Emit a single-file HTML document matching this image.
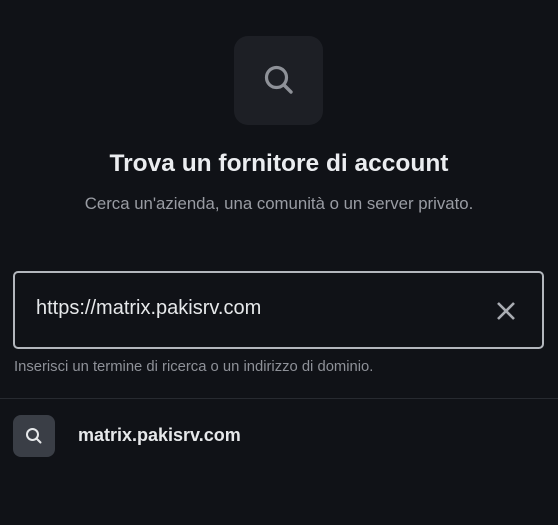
<!DOCTYPE html>
<html><head><style>
body{margin:0;width:558px;height:525px;background:#101217;font-family:"Liberation Sans",sans-serif;position:relative;overflow:hidden}
.a{position:absolute}
</style></head><body>
<div class="a" style="left:234px;top:36px;width:89px;height:89px;border-radius:14px;background:#1d1f25"></div>
<svg class="a" style="left:260px;top:61px" width="38" height="38" viewBox="0 0 38 38"><circle cx="16.5" cy="16.5" r="10" fill="none" stroke="#8e9198" stroke-width="3.2"/><line x1="24" y1="24" x2="31" y2="31" stroke="#8e9198" stroke-width="3.4" stroke-linecap="round"/></svg>
<div class="a" style="left:0;width:558px;top:150px;text-align:center;color:#ebedf0;font-size:24.5px;font-weight:bold">Trova un fornitore di account</div>
<div class="a" style="left:0;width:558px;top:194px;text-align:center;color:#999ca3;font-size:16.8px">Cerca un'azienda, una comunità o un server privato.</div>
<div class="a" style="left:13px;top:271px;width:527px;height:74px;border:2.5px solid #b3b7bd;border-radius:5px"></div>
<div class="a" style="left:36px;top:297px;color:#e6e8ea;font-size:20px">https://matrix.pakisrv.com</div>
<svg class="a" style="left:495px;top:300px" width="22" height="22" viewBox="0 0 22 22"><path d="M3 3L19 19M19 3L3 19" stroke="#a9acb2" stroke-width="2.6"/></svg>
<div class="a" style="left:14px;top:359px;color:#8e9198;font-size:14.8px">Inserisci un termine di ricerca o un indirizzo di dominio.</div>
<div class="a" style="left:0;top:398px;width:558px;height:1px;background:#272a30"></div>
<div class="a" style="left:13px;top:415px;width:42px;height:42px;border-radius:8px;background:#3a3e46"></div>
<svg class="a" style="left:24px;top:426px" width="20" height="20" viewBox="0 0 20 20"><circle cx="8.5" cy="8.5" r="5.5" fill="none" stroke="#e6e8ea" stroke-width="2"/><line x1="12.5" y1="12.5" x2="16.5" y2="16.5" stroke="#e6e8ea" stroke-width="2" stroke-linecap="round"/></svg>
<div class="a" style="left:78px;top:425px;color:#e6e8ea;font-size:18px;font-weight:bold">matrix.pakisrv.com</div>
</body></html>
